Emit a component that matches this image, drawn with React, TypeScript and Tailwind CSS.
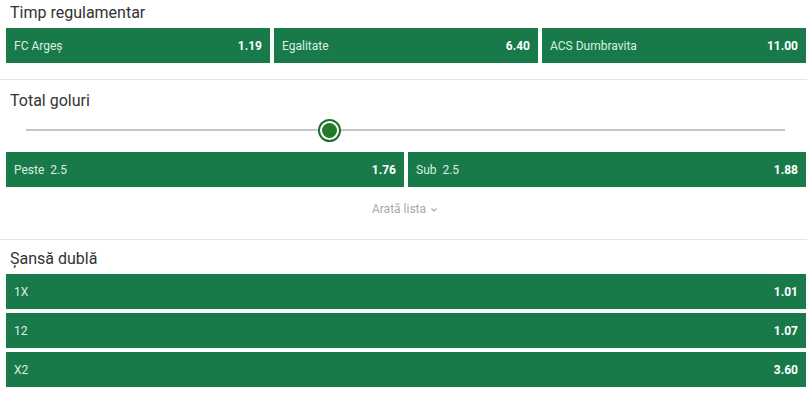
import React from "react";

const font = { fontFamily: "Roboto, 'Liberation Sans', sans-serif" };

const Odd = ({ label, value, className = "" }: { label: React.ReactNode; value: string; className?: string }) => (
  <div className={`flex items-center justify-between h-[35px] bg-[#177a48] pl-2 pr-[8px] ${className}`}>
    <span className="text-[12px] text-[#dcefe3]">{label}</span>
    <span className="text-[12px] font-bold text-white">{value}</span>
  </div>
);

const Title = ({ children }: { children: React.ReactNode }) => (
  <div className="h-[28px] pl-[10px] pt-[3px] text-[16px] leading-[20px] text-[#333]">{children}</div>
);

export default function App() {
  return (
    <div className="w-[807px] h-[395px] bg-white overflow-hidden" style={font}>
      {/* Timp regulamentar */}
      <section className="pb-[16px] border-b border-[#e3e3e3]">
        <Title>Timp regulamentar</Title>
        <div className="flex gap-[4px] pl-[6px] pr-[1px]">
          <Odd label="FC Argeș" value="1.19" className="flex-1" />
          <Odd label="Egalitate" value="6.40" className="flex-1" />
          <Odd label="ACS Dumbravita" value="11.00" className="flex-1" />
        </div>
      </section>

      {/* Total goluri */}
      <section className="pt-[8px] border-b border-[#e3e3e3] h-[160px]">
        <Title>Total goluri</Title>
        <div className="relative h-[36px] ml-[26px] mr-[22px]">
          <div className="absolute left-0 right-0 top-[13px] h-[2px] bg-[#c6c6c6]" />
          <div className="absolute left-[292px] top-[3px] w-[23px] h-[23px] rounded-full border-[2px] border-[#1d6f2e] bg-white flex items-center justify-center">
            <div className="w-[15px] h-[15px] rounded-full bg-[#247a28]" />
          </div>
        </div>
        <div className="flex gap-[4px] pl-[6px] pr-[1px]">
          <Odd label={<>Peste&nbsp; 2.5</>} value="1.76" className="flex-1" />
          <Odd label={<>Sub&nbsp; 2.5</>} value="1.88" className="flex-1" />
        </div>
        <div className="flex justify-center items-center pt-[13px] pl-[2px] text-[12px] text-[#a9a9a9]">
          <span>Arată lista</span>
          <svg className="ml-[5px] mt-[1px]" width="6" height="4" viewBox="0 0 6 4">
            <path d="M0.5 0.5 L3 3 L5.5 0.5" fill="none" stroke="#a9a9a9" strokeWidth="1.2" />
          </svg>
        </div>
      </section>

      {/* Șansă dublă */}
      <section className="pt-[6px]">
        <Title>Șansă dublă</Title>
        <div className="flex flex-col gap-[4px] pl-[6px] pr-[1px]">
          <Odd label="1X" value="1.01" />
          <Odd label="12" value="1.07" />
          <Odd label="X2" value="3.60" />
        </div>
      </section>
    </div>
  );
}
